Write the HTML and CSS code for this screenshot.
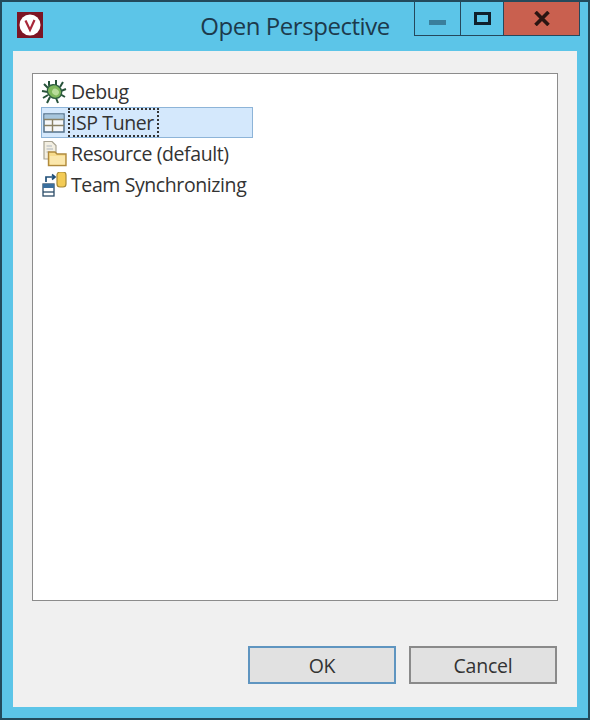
FILE: index.html
```html
<!DOCTYPE html>
<html>
<head>
  <title>Open Perspective</title>
  <link rel="stylesheet" href="styles.css">
</head>
<body>
  <div class="window">
    <div class="titlebar">
      <div class="app-icon">
        <svg width="26" height="26" viewBox="0 0 26 26">
          <rect width="26" height="26" fill="#7c1524"/>
          <circle cx="13" cy="13" r="10.5" fill="#fff"/>
          <path d="M8.5 8.5 L13 18 L17.5 8" fill="none" stroke="#a8283a" stroke-width="2.2"/>
        </svg>
      </div>
      <div class="title">Open Perspective</div>
      <div class="win-controls">
        <div class="win-btn min"><span class="min-bar"></span></div>
        <div class="win-btn max"><span class="max-box"></span></div>
        <div class="win-btn close">
          <svg width="16" height="15" viewBox="0 0 16 15"><path d="M1.5 1 L14.5 14 M14.5 1 L1.5 14" stroke="#2a1512" stroke-width="3.6"/></svg>
        </div>
      </div>
    </div>

    <div class="content">
      <div class="list">
        <div class="item">
          <svg class="item-icon" width="26" height="26" viewBox="0 0 26 26">
            <path d="M8 2 L8 6 L11 9 M15 1 L15 6 M3 5 L7 9 M22 3 L19 8 M1 12 L7 13 M25 10 L20 12 M2 19 L7 16 M24 18 L19 15 M6 24 L9 18 M17 24 L15 19" stroke="#27523a" stroke-width="2" fill="none"/>
            <ellipse cx="13.5" cy="12.5" rx="7.5" ry="6.5" transform="rotate(35 13.5 12.5)" fill="#7fb85c" stroke="#2f5f40" stroke-width="1.4"/>
            <ellipse cx="14.5" cy="13" rx="3.6" ry="3" transform="rotate(35 14.5 13)" fill="#b9dc9a"/>
          </svg>
          <span class="label">Debug</span>
        </div>
        <div class="item selected">
          <svg class="item-icon" width="22" height="20" viewBox="0 0 22 20">
            <rect x="1" y="1" width="20" height="18" fill="#f6f8fa" stroke="#53718a" stroke-width="1.5"/>
            <rect x="1.5" y="1.5" width="19" height="4.5" fill="#a7c6dd"/>
            <path d="M1 6.5 H21 M1 12.5 H21 M9.5 6.5 V19" stroke="#8a8266" stroke-width="1.4"/>
          </svg>
          <span class="label focused">ISP Tuner</span>
        </div>
        <div class="item">
          <svg class="item-icon" width="26" height="26" viewBox="0 0 26 26">
            <path d="M3 0.5 H11 L15 4.5 V18 H3 Z" fill="#f3efe2" stroke="#a9a493" stroke-width="1.2"/>
            <path d="M5.5 5 H11 M5.5 8 H12 M5.5 11 H9" stroke="#aeb6bd" stroke-width="1.2"/>
            <path d="M7.5 11 H14 L16 13 H25 V24.5 H7.5 Z" fill="#f8dc8c" stroke="#b08a3e" stroke-width="1.4"/>
            <rect x="9" y="15" width="15" height="8.5" fill="#fbe7ac"/>
          </svg>
          <span class="label">Resource (default)</span>
        </div>
        <div class="item">
          <svg class="item-icon" width="26" height="26" viewBox="0 0 26 26">
            <rect x="16" y="0" width="9" height="15" rx="3" fill="#f3cb55" stroke="#a78a35" stroke-width="1.2"/>
            <path d="M5 10 V5 H14 M11 2.5 L14 5 L11 7.5" fill="none" stroke="#1f4f78" stroke-width="1.7"/>
            <rect x="2" y="12" width="11" height="12" fill="#fff" stroke="#2b4c68" stroke-width="1.3"/>
            <rect x="2" y="12" width="11" height="4" fill="#3a6f9e"/>
            <path d="M2 20 H13" stroke="#2b4c68" stroke-width="1.3"/>
          </svg>
          <span class="label">Team Synchronizing</span>
        </div>
      </div>

      <div class="buttons">
        <button class="btn default">OK</button>
        <button class="btn">Cancel</button>
      </div>
    </div>
  </div>
</body>
</html>
```

FILE: styles.css
```css
html, body { margin: 0; padding: 0; }
body { width: 590px; height: 720px; overflow: hidden; font-family: "Open Sans", "Noto Sans", sans-serif; }

.window {
  box-sizing: border-box;
  width: 590px;
  height: 720px;
  display: flex;
  flex-direction: column;
  background: #5cc5e8;
  border: 2px solid #234a5c;
  padding: 0 11px 12px;
}

.titlebar {
  height: 49px;
  flex: none;
  display: grid;
  grid-template-columns: 1fr auto 1fr;
}
.app-icon { padding: 10px 0 0 4px; }
.app-icon svg { display: block; }
.title {
  font-size: 24px;
  line-height: 48px;
  color: #1c3a4c;
  letter-spacing: -0.45px;
}

.win-controls {
  justify-self: end;
  display: flex;
  height: 34px;
  margin-right: -3px;
}
.win-btn {
  box-sizing: border-box;
  height: 34px;
  display: flex;
  align-items: center;
  justify-content: center;
  border: 1px solid #25485c;
  border-top: none;
}
.min { width: 47px; }
.max { width: 43px; border-left: none; }
.close { width: 76px; border-left: none; background: #c9604f; }
.min-bar { width: 17px; height: 5px; margin-top: 8px; background: #3a7f9c; }
.max-box { width: 11px; height: 7px; border: 3px solid #10202c; margin-top: -1px; }
.close svg { margin-top: -1px; }

.content {
  flex: 1;
  display: flex;
  flex-direction: column;
  background: #f0f0f0;
  padding: 22px 19px 23px;
}

.list {
  box-sizing: border-box;
  height: 528px;
  background: #fff;
  border: 1.5px solid #8c8c8c;
  padding: 2px 8px;
}
.item {
  width: 212px;
  height: 31px;
  box-sizing: border-box;
  display: flex;
  align-items: center;
  white-space: nowrap;
  font-size: 19.5px;
  letter-spacing: -0.4px;
  color: #333;
}
.item-icon { flex: none; width: 26px; margin-right: 4px; }
.item.selected { background: #d4e8fc; box-shadow: inset 0 0 0 1px #8db4d8; }
.label { line-height: 26px; }
.label.focused {
  outline: 2px dotted #333;
  outline-offset: -2px;
  line-height: 29px;
  height: 29px;
  margin-left: -3px;
  padding: 0 5px 0 3px;
}

.buttons {
  display: flex;
  justify-content: flex-end;
  gap: 13px;
  margin-top: 45px;
  padding-right: 1px;
}
.btn {
  box-sizing: border-box;
  width: 148px;
  height: 38px;
  background: #e1e1e1;
  border: 2px solid #8a8a8a;
  font-family: inherit;
  font-size: 19.5px;
  letter-spacing: -0.2px;
  color: #333;
  padding: 0;
}
.btn.default { border-color: #5f95c0; }
```
